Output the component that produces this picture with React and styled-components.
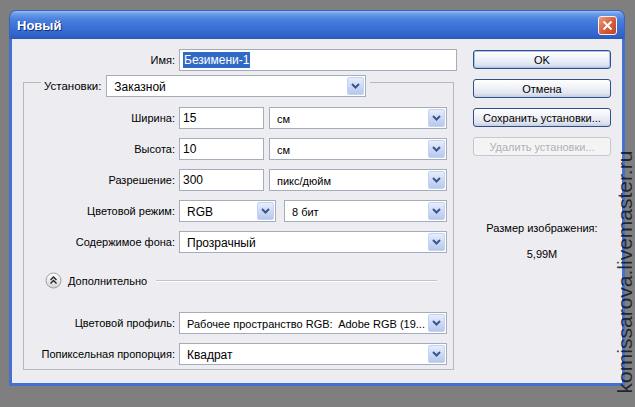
import React from 'react';
import styled, { createGlobalStyle } from 'styled-components';

const GlobalStyle = createGlobalStyle`
  html, body {
    margin: 0;
    padding: 0;
    background: #7f7f7f;
    height: 100%;
  }
  body {
    font-family: "Liberation Sans", Arial, sans-serif;
    font-size: 11px;
    color: #000;
    overflow: hidden;
  }
`;

const Window = styled.div`
  width: 616px;
  margin: 10px 0 0 9px;
`;

const TitleBar = styled.div`
  height: 29px;
  box-sizing: border-box;
  border-radius: 7px 7px 0 0;
  background: linear-gradient(#9cc0f4 0%, #6a9ce8 10%, #4a80de 30%, #3a70d6 60%, #3264cc 85%, #2a58bd 100%);
  display: flex;
  align-items: center;
  justify-content: space-between;
  padding: 0 7px 0 7px;
  border: 1px solid #3562c2;
  border-bottom: none;
`;

const Title = styled.div`
  color: #fff;
  font-weight: bold;
  font-size: 13px;
  text-shadow: 1px 1px 0 #14307a;
  padding-top: 1px;
`;

const CloseButton = styled.div`
  width: 19px;
  height: 19px;
  box-sizing: border-box;
  border: 1px solid #f4f4f4;
  border-radius: 3px;
  background: linear-gradient(135deg, #ee9c80 0%, #d9603d 50%, #c3421f 100%);
  display: flex;
  align-items: center;
  justify-content: center;
  margin-top: 1px;
`;

const Body = styled.div`
  height: 347px;
  box-sizing: border-box;
  background: #edecf0;
  border: 3px solid #4470d0;
  border-top: none;
  display: flex;
  padding-top: 10px;
`;

const LeftCol = styled.div`
  width: 445px;
  display: flex;
  flex-direction: column;
`;

const RightCol = styled.div`
  width: 138px;
  margin-left: 16px;
  padding-top: 1px;
  display: flex;
  flex-direction: column;
  gap: 10px;
`;

const NameRow = styled.div`
  display: flex;
  align-items: center;
`;

const Label = styled.div`
  width: ${p => (p.$w || 151) + 4}px;
  text-align: right;
  padding-right: 4px;
  box-sizing: border-box;
  white-space: nowrap;
`;

const TextBox = styled.div`
  width: ${p => p.$w}px;
  height: 22px;
  box-sizing: border-box;
  background: #fff;
  border: 1px solid #a4adb9;
  font-size: 12px;
  display: flex;
  align-items: center;
  padding-left: 3px;
`;

const Selected = styled.span`
  background: #316ac5;
  color: #fff;
  padding: 1px 1px;
`;

const ComboBox = styled.div`
  width: ${p => p.$w}px;
  height: 22px;
  box-sizing: border-box;
  background: #fff;
  border: 1px solid #a4adb9;
  display: flex;
  align-items: center;
  justify-content: space-between;
  padding: 1px 1px 1px 7px;
  font-size: ${p => (p.$small ? 11 : 12)}px;
  white-space: nowrap;
  margin-left: ${p => p.$ml || 0}px;
`;

const ComboText = styled.span`
  overflow: hidden;
  padding-top: 1px;
`;

const ArrowButton = styled.div`
  width: 17px;
  height: 18px;
  flex: none;
  box-sizing: border-box;
  border: 1px solid #c3d3f3;
  border-radius: 2px;
  background: linear-gradient(#e6eefc 0%, #ccdaf6 50%, #b6c8ee 100%);
  display: flex;
  align-items: center;
  justify-content: center;
`;

const Group = styled.div`
  margin: 11px 0 0 11px;
  width: 431px;
  box-sizing: border-box;
  border: 1px solid #b8b8bc;
  padding-bottom: 4px;
  display: flex;
  flex-direction: column;
`;

const GroupHeader = styled.div`
  display: flex;
  align-self: flex-start;
  align-items: center;
  gap: 5px;
  margin: -8px 0 0 17px;
  padding: 0 4px 0 3px;
  background: #edecf0;
  font-size: 11.5px;
`;

const Rows = styled.div`
  display: flex;
  flex-direction: column;
  gap: 9px;
  margin-top: ${p => p.$mt}px;
`;

const Row = styled.div`
  display: flex;
  align-items: center;
`;

const Advanced = styled.div`
  display: flex;
  align-items: center;
  margin: 19px 16px 0 21px;
  gap: 6px;
`;

const Rule = styled.div`
  flex: 1;
  height: 1px;
  background: #c4c4c8;
  border-bottom: 1px solid #fff;
  margin-left: 3px;
`;

const Button = styled.div`
  height: 19px;
  box-sizing: border-box;
  border: 1px solid ${p => (p.$disabled ? '#c6c8d0' : '#2f4f86')};
  border-radius: 3px;
  background: ${p =>
    p.$disabled
      ? '#f4f4f4'
      : 'linear-gradient(#ffffff 0%, #f1f3f8 40%, #dfe4ef 80%, #c4cde2 100%)'};
  color: ${p => (p.$disabled ? '#b0b0b6' : '#000')};
  box-shadow: ${p => (p.$default ? 'inset 0 0 0 1px #a9c1ee' : 'none')};
  display: flex;
  align-items: center;
  justify-content: center;
  white-space: nowrap;
`;

const SizeInfo = styled.div`
  margin-top: 56px;
  display: flex;
  flex-direction: column;
  align-items: center;
  gap: 13px;
  line-height: 13px;
`;

const Watermark = styled.div`
  position: absolute;
  left: 625px;
  top: 272px;
  transform: translate(-50%, -50%) rotate(-90deg);
  white-space: nowrap;
  font-family: "Liberation Sans", Arial, sans-serif;
  font-size: 21px;
  color: rgba(20, 20, 30, 0.85);
`;

function Chevron() {
  return (
    <svg width="9" height="6" viewBox="0 0 9 6">
      <path d="M1 1 L4.5 4.5 L8 1" fill="none" stroke="#3e5488" strokeWidth="2" />
    </svg>
  );
}

function Combo({ w, small, ml, children }) {
  return (
    <ComboBox $w={w} $small={small} $ml={ml}>
      <ComboText>{children}</ComboText>
      <ArrowButton><Chevron /></ArrowButton>
    </ComboBox>
  );
}

function CollapseIcon() {
  return (
    <svg width="17" height="17" viewBox="0 0 17 17">
      <defs>
        <linearGradient id="cg" x1="0" y1="0" x2="0" y2="1">
          <stop offset="0" stopColor="#ffffff" />
          <stop offset="1" stopColor="#d4d4d8" />
        </linearGradient>
      </defs>
      <circle cx="8.5" cy="8.5" r="7.5" fill="url(#cg)" stroke="#9c9ca4" />
      <path d="M5.5 8 L8.5 5 L11.5 8 M5.5 11.5 L8.5 8.5 L11.5 11.5" fill="none" stroke="#222" strokeWidth="1.4" />
    </svg>
  );
}

export default function App() {
  return (
    <>
      <GlobalStyle />
      <Window>
        <TitleBar>
          <Title>Новый</Title>
          <CloseButton>
            <svg width="11" height="11" viewBox="0 0 11 11">
              <path d="M1.5 1.5 L9.5 9.5 M9.5 1.5 L1.5 9.5" stroke="#fff" strokeWidth="2" />
            </svg>
          </CloseButton>
        </TitleBar>
        <Body>
          <LeftCol>
            <NameRow>
              <Label $w={163}>Имя:</Label>
              <TextBox $w={278}><Selected>Безимени-1</Selected></TextBox>
            </NameRow>
            <Group>
              <GroupHeader>
                <span>Установки:</span>
                <Combo w={260}>Заказной</Combo>
              </GroupHeader>
              <Rows $mt={10}>
                <Row>
                  <Label>Ширина:</Label>
                  <TextBox $w={85}>15</TextBox>
                  <Combo w={178} ml={5} small>см</Combo>
                </Row>
                <Row>
                  <Label>Высота:</Label>
                  <TextBox $w={85}>10</TextBox>
                  <Combo w={178} ml={5} small>см</Combo>
                </Row>
                <Row>
                  <Label>Разрешение:</Label>
                  <TextBox $w={85}>300</TextBox>
                  <Combo w={178} ml={5} small>пикс/дюйм</Combo>
                </Row>
                <Row>
                  <Label>Цветовой режим:</Label>
                  <Combo w={97}>RGB</Combo>
                  <Combo w={163} ml={8} small>8 бит</Combo>
                </Row>
                <Row>
                  <Label>Содержимое фона:</Label>
                  <Combo w={268}>Прозрачный</Combo>
                </Row>
              </Rows>
              <Advanced>
                <CollapseIcon />
                <span>Дополнительно</span>
                <Rule />
              </Advanced>
              <Rows $mt={23}>
                <Row>
                  <Label>Цветовой профиль:</Label>
                  <Combo w={268} small>Рабочее пространство RGB:&nbsp; Adobe RGB (19...</Combo>
                </Row>
                <Row>
                  <Label>Попиксельная пропорция:</Label>
                  <Combo w={268}>Квадрат</Combo>
                </Row>
              </Rows>
            </Group>
          </LeftCol>
          <RightCol>
            <Button $default>OK</Button>
            <Button>Отмена</Button>
            <Button>Сохранить установки...</Button>
            <Button $disabled>Удалить установки...</Button>
            <SizeInfo>
              <span>Размер изображения:</span>
              <span>5,99M</span>
            </SizeInfo>
          </RightCol>
        </Body>
      </Window>
      <Watermark>komissarova.livemaster.ru</Watermark>
    </>
  );
}
